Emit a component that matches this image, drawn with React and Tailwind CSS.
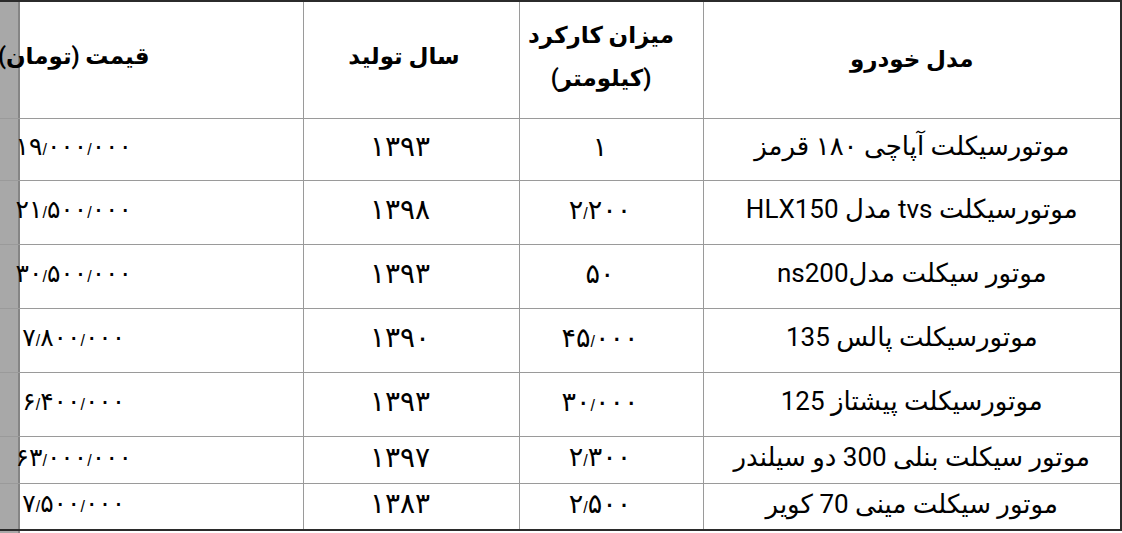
import React from 'react';

const rows = [
    { model: 'موتورسیکلت آپاچی ۱۸۰ قرمز', km: '۱', year: '۱۳۹۳', price: '۱۹/۰۰۰/۰۰۰', h: 'h-[62px]' },
    { model: 'موتورسیکلت tvs مدل HLX150', km: '۲/۲۰۰', year: '۱۳۹۸', price: '۲۱/۵۰۰/۰۰۰', h: 'h-[64px]' },
    { model: 'موتور سیکلت مدلns200', km: '۵۰', year: '۱۳۹۳', price: '۳۰/۵۰۰/۰۰۰', h: 'h-[64px]' },
    { model: 'موتورسیکلت پالس 135', km: '۴۵/۰۰۰', year: '۱۳۹۰', price: '۷/۸۰۰/۰۰۰', h: 'h-[64px]' },
    { model: 'موتورسیکلت پیشتاز 125', km: '۳۰/۰۰۰', year: '۱۳۹۳', price: '۶/۴۰۰/۰۰۰', h: 'h-[64px]' },
    { model: 'موتور سیکلت بنلی 300 دو سیلندر', km: '۲/۳۰۰', year: '۱۳۹۷', price: '۶۳/۰۰۰/۰۰۰', h: 'h-[47px]' },
    { model: 'موتور سیکلت مینی 70 کویر', km: '۲/۵۰۰', year: '۱۳۸۳', price: '۷/۵۰۰/۰۰۰', h: 'h-[47px]' },
];

// اعداد فارسی با جداکننده کوچک
const Num = ({ value }) => {
    const parts = value.split('/');
    return (
        <span dir="ltr" className="inline-block">
            {parts.map((p, i) => (
                <React.Fragment key={i}>
                    {i > 0 && <span className="text-[16px] font-['Liberation_Sans',sans-serif]">/</span>}
                    {p}
                </React.Fragment>
            ))}
        </span>
    );
};

// جدول قیمت موتورسیکلت
const App = () => {
    return (
        <div className="relative w-[1122px] h-[533px] overflow-hidden bg-white font-['Roboto','DejaVu_Sans',sans-serif] text-black">
            <div className="absolute left-0 top-0 bottom-0 w-[20px] bg-[#a8a8a8] border-r-2 border-[#858585]" />
            <div className="relative ml-[-155px] w-[1276px]">
                <table dir="rtl" className="table-fixed border-collapse w-[1276px] text-[26px] leading-[1.2]">
                    <colgroup>
                        <col className="w-[418px]" />
                        <col className="w-[184px]" />
                        <col className="w-[216px]" />
                        <col className="w-[458px]" />
                    </colgroup>
                    <thead>
                        <tr className="h-[117px] border-t-2 border-[#2b2b2b] font-bold text-[23px]">
                            <th className="border-r-2 border-r-[#2b2b2b] border-l border-b border-[#9a9a9a] text-center">مدل خودرو</th>
                            <th className="border-l border-b border-[#9a9a9a] text-center leading-[43px] pr-[20px] pb-[6px]">
                                میزان کارکرد
                                <br />
                                (کیلومتر)
                            </th>
                            <th className="border-l border-b border-[#9a9a9a] text-center pr-[14px] pb-[6px]">سال تولید</th>
                            <th className="border-b border-[#9a9a9a] text-center pb-[6px]">قیمت (تومان)</th>
                        </tr>
                    </thead>
                    <tbody>
                        {rows.map((r, i) => (
                            <tr key={i} className={`${r.h} ${i === rows.length - 1 ? 'border-b-2 border-b-[#2b2b2b]' : 'border-b border-[#9a9a9a]'}`}>
                                <td className="border-r-2 border-r-[#2b2b2b] border-l border-l-[#9a9a9a] text-center pb-[4px]">{r.model}</td>
                                <td className="border-l border-l-[#9a9a9a] text-center text-[27px] pr-[22px] pb-[4px]"><Num value={r.km} /></td>
                                <td className="border-l border-l-[#9a9a9a] text-center text-[28px] pr-[22px] pb-[4px]"><Num value={r.year} /></td>
                                <td className="text-center text-[25px] pb-[4px]"><Num value={r.price} /></td>
                            </tr>
                        ))}
                    </tbody>
                </table>
            </div>
        </div>
    );
};

export default App;
